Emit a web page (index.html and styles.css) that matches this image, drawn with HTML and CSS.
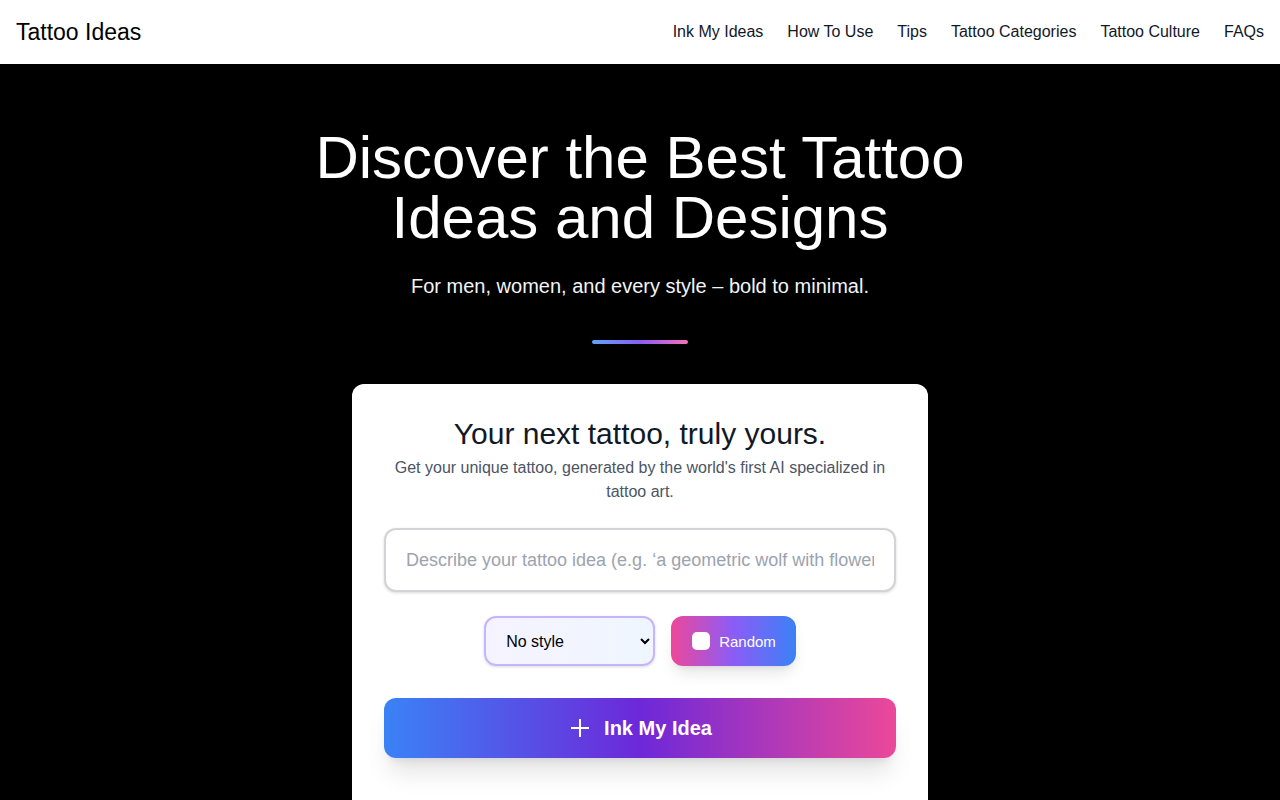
FILE: index.html
```html
<!DOCTYPE html>
<html lang="en">
<head>
    <meta charset="UTF-8">
    <meta name="viewport" content="width=device-width, initial-scale=1.0">
    <title>Tattoo Ideas</title>
    <link rel="stylesheet" href="styles.css">
</head>
<body>

    <header class="header">
        <a class="logo" href="#">Tattoo Ideas</a>
        <nav class="nav">
            <a href="#ink">Ink My Ideas</a>
            <a href="#how-to">How To Use</a>
            <a href="#tips">Tips</a>
            <a href="#categories">Tattoo Categories</a>
            <a href="#culture">Tattoo Culture</a>
            <a href="#faqs">FAQs</a>
        </nav>
    </header>

    <main class="hero">
        <h1 class="title">Discover the Best Tattoo Ideas and Designs</h1>
        <p class="subtitle">For men, women, and every style – bold to minimal.</p>
        <div class="divider"></div>

        <form class="card" id="ink">
            <h2 class="card-title">Your next tattoo, truly yours.</h2>
            <p class="card-text">Get your unique tattoo, generated by the world's first AI specialized in tattoo art.</p>

            <input class="idea-input" type="text" aria-label="Tattoo idea" placeholder="Describe your tattoo idea (e.g. ‘a geometric wolf with flowers’)">

            <div class="options">
                <select class="style-select" aria-label="Tattoo style">
                    <option>No style</option>
                    <option>Minimalist</option>
                    <option>Traditional</option>
                    <option>Geometric</option>
                    <option>Watercolor</option>
                </select>
                <button class="random-btn" type="button">
                    <svg width="20" height="20" viewBox="0 0 20 20" aria-hidden="true">
                        <rect x="1" y="1" width="18" height="18" rx="5" fill="#fff"/>
                    </svg>
                    Random
                </button>
            </div>

            <button class="submit-btn" type="submit">
                <svg width="24" height="24" viewBox="0 0 24 24" fill="none" stroke="#fff" stroke-width="2" aria-hidden="true">
                    <path d="M12 3v18M3 12h18"/>
                </svg>
                Ink My Idea
            </button>
        </form>
    </main>

</body>
</html>
```
FILE: styles.css
```css
* {
    box-sizing: border-box;
}
body {
    margin: 0;
    font-family: "Liberation Sans", Arial, sans-serif;
    font-size: 16px;
    line-height: 24px;
    color: #111827;
    background-color: #000;
}
h1, h2, p {
    margin: 0;
    font-weight: normal;
}
a {
    color: inherit;
    text-decoration: none;
}
button, input, select {
    font-family: inherit;
}
.header {
    display: flex;
    align-items: center;
    justify-content: space-between;
    min-height: 64px;
    padding: 0 16px;
    background-color: #fff;
}
.logo {
    font-size: 23px;
    color: #000;
}
.nav {
    display: flex;
    gap: 24px;
    font-size: 16px;
}
.hero {
    display: flex;
    flex-direction: column;
    align-items: center;
    padding: 64px 16px;
}
.title {
    max-width: 768px;
    font-size: 60px;
    line-height: 60px;
    color: #fff;
    text-align: center;
}
.subtitle {
    margin-top: 24px;
    font-size: 20px;
    line-height: 28px;
    color: #f3f4f6;
    text-align: center;
}
.divider {
    width: 96px;
    height: 4px;
    margin: 40px 0;
    border-radius: 4px;
    background: linear-gradient(to right, #60a5fa, #8b5cf6, #f472b6);
}
.card {
    display: flex;
    flex-direction: column;
    width: 100%;
    max-width: 576px;
    padding: 32px;
    border-radius: 12px;
    background-color: #fff;
    text-align: center;
}
.card-title {
    font-size: 30px;
    line-height: 36px;
}
.card-text {
    margin-top: 4px;
    font-size: 16px;
    color: #4b5563;
}
.idea-input {
    width: 100%;
    height: 64px;
    margin-top: 24px;
    padding: 0 20px;
    font-size: 18px;
    color: #111827;
    background-color: #fff;
    border: 2px solid #d4d4d8;
    border-radius: 12px;
    box-shadow: 0 1px 3px rgba(0,0,0,0.15);
}
.idea-input::placeholder {
    color: #9ca3af;
}
.options {
    display: flex;
    justify-content: center;
    gap: 16px;
    margin-top: 24px;
}
.style-select {
    width: 171px;
    height: 50px;
    padding: 0 0 0 16px;
    font-size: 16px;
    color: #000;
    background: linear-gradient(to right, #f5f3ff, #eff6ff);
    border: 2px solid #c4b5fd;
    border-radius: 12px;
    box-shadow: 0 1px 3px rgba(0,0,0,0.15);
}
.random-btn {
    display: flex;
    align-items: center;
    gap: 8px;
    height: 50px;
    padding: 0 20px;
    font-size: 15px;
    color: #fff;
    background: linear-gradient(to right, #ec4899, #8b5cf6, #3b82f6);
    border: none;
    border-radius: 12px;
    box-shadow: 0 10px 15px -3px rgba(0,0,0,0.1), 0 4px 6px -4px rgba(0,0,0,0.1);
}
.submit-btn {
    display: flex;
    align-items: center;
    justify-content: center;
    gap: 12px;
    height: 60px;
    margin: 32px 0;
    font-size: 20px;
    font-weight: bold;
    color: #fff;
    background: linear-gradient(to right, #3b82f6, #6d28d9, #ec4899);
    border: none;
    border-radius: 12px;
    box-shadow: 0 20px 25px -5px rgba(0,0,0,0.1), 0 8px 10px -6px rgba(0,0,0,0.1);
}
button, select {
    cursor: pointer;
}
@media (max-width: 768px) {
    .nav {
        display: none;
    }
    .title {
        font-size: 40px;
        line-height: 44px;
    }
}
```
